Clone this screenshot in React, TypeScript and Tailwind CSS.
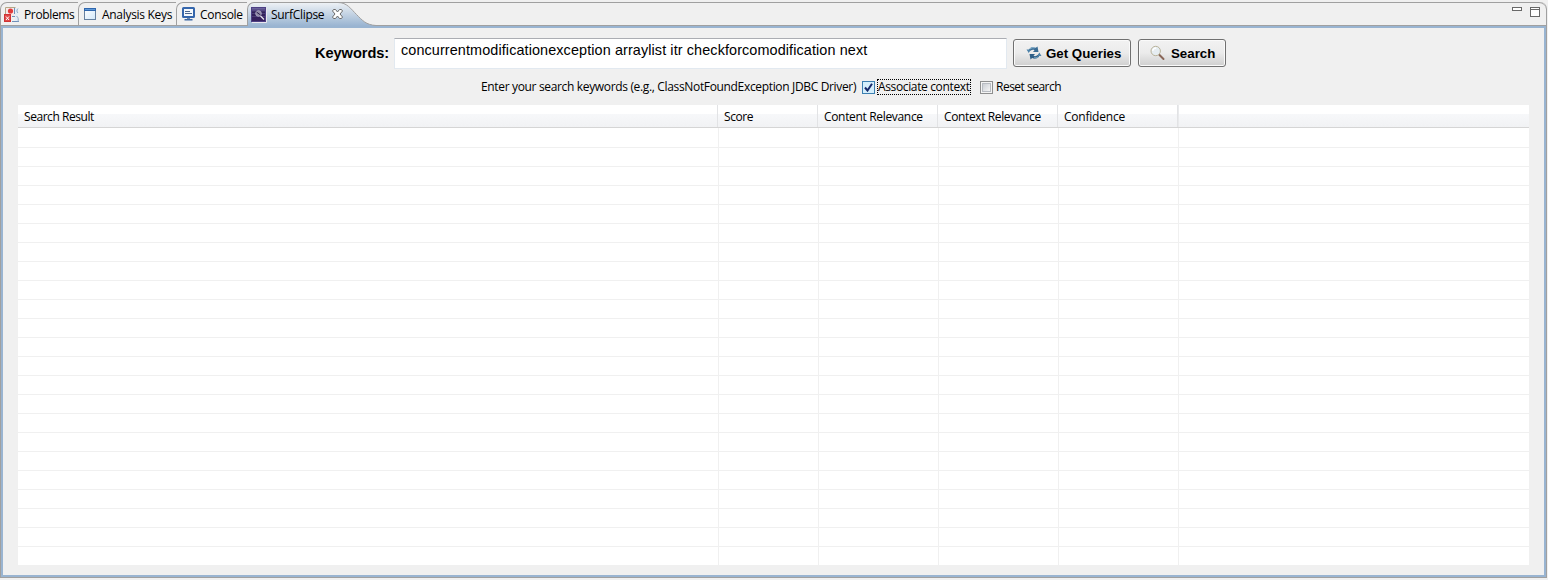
import type { ReactNode } from "react";

const ui = "font-['Open_Sans','Noto_Sans',sans-serif] text-[12px] leading-[16px] text-black whitespace-nowrap";

function ProblemsIcon() {
  return (
    <svg width="16" height="16" viewBox="0 0 16 16" className="mt-px shrink-0">
      <path d="M1.500 7V.500h10" stroke="#b5a888" fill="none" />
      <path d="M2 1h8v8H2z" fill="#f6e9e9" />
      <circle cx="6.500" cy="4" r="2.600" fill="#e23a3a" />
      <path d="M11 1v14h3V12l-1.500-2 1.500-2.500V4L12.500 1z" fill="#e4edf6" />
      <path d="M10.500 1v6M8 9.500h3M8 14.500h7" stroke="#6f8fb8" />
      <path d="M14 1.500c-1.500 2-1.500 3 0 4.500M12.500 9c2 1.500 2 3.500 1.500 5.500" stroke="#8ea9c9" fill="none" />
      <rect x="0.500" y="7.500" width="6" height="7" fill="#e04848" stroke="#cf3333" />
      <path d="M2 9.500l3 3.500M5 9.500l-3 3.500" stroke="#fff" />
    </svg>
  );
}

function WindowIcon() {
  return (
    <svg width="14" height="14" viewBox="0 0 14 14" className="shrink-0">
      <defs>
        <linearGradient id="win" x1="0" y1="0" x2="1" y2="1">
          <stop offset="0" stopColor="#fff" />
          <stop offset="1" stopColor="#d3e8fa" />
        </linearGradient>
      </defs>
      <rect x="0.500" y="1.500" width="11" height="11" fill="url(#win)" stroke="#66809f" />
      <path d="M0 1h12v3H0z" fill="#2f66ad" />
      <path d="M1 2h10v1H1z" fill="#5f99d8" />
    </svg>
  );
}

function ConsoleIcon() {
  return (
    <svg width="14" height="14" viewBox="0 0 14 14" className="shrink-0">
      <rect x="1" y="1" width="11" height="9" rx="0.500" fill="#f5f9fd" stroke="#3566ac" strokeWidth="2" />
      <path d="M3 4.500h5M3 6.500h7" stroke="#49658f" />
      <path d="M5 11h3v1H5z" fill="#6c86a8" />
      <path d="M2.500 12h8v1.500h-8z" fill="#3b67a5" />
    </svg>
  );
}

function SurfIcon() {
  return (
    <svg width="16" height="16" viewBox="0 0 16 16" className="shrink-0">
      <defs>
        <linearGradient id="surf" x1="0" y1="0" x2="0" y2="1">
          <stop offset="0" stopColor="#7872ad" />
          <stop offset="0.350" stopColor="#302158" />
          <stop offset="1" stopColor="#37205f" />
        </linearGradient>
      </defs>
      <rect x="0.500" y="0.500" width="14" height="14" fill="url(#surf)" stroke="#4d4084" />
      <path d="M1 3.500h13M1 6.500h13M1 9.500h13" stroke="#5c4d8b" opacity="0.600" />
      <circle cx="7.500" cy="6.500" r="2.800" fill="#8d88a3" stroke="#a9a4c0" />
      <path d="M5.500 5l4 3" stroke="#2a1b4d" />
      <path d="M9.500 9l3.500 3.500" stroke="#e9e8ef" strokeWidth="1.300" />
      <path d="M1 15.500h14.500V1" stroke="#e9e6ee" fill="none" />
    </svg>
  );
}

function CloseIcon() {
  return (
    <svg width="12" height="11" viewBox="0 0 12 11" className="-mt-px shrink-0">
      <path
        d="M1.500 .5h2l2 2.500 2-2.500h2l1 1.500L8 5l2.500 3-1 1.500h-2L5.500 7l-2 2.500h-2L.500 8 3 5 .500 2z"
        fill="#fff"
        stroke="#6b6b6b"
      />
    </svg>
  );
}

function RefreshIcon() {
  return (
    <svg width="16" height="14" viewBox="0 0 16 14" className="shrink-0">
      <path d="M2.500 6.500C2 2 6 0 9.800 1.800L11.500.500 12.500 6H7l1.500-1.700C7 3.300 4.500 4 2.500 6.500z" fill="#3a6c94" />
      <path d="M13.500 7c.8 4.500-3.500 7-7.300 5L4.500 13.500 3.500 8H9L7.500 9.700c1.500 1 4 .3 6-2.700z" fill="#2f5f87" />
      <path d="M.500 3.500h4L2.800 7zM11.500 10H15.500L13.300 6.500z" fill="#4d83aa" />
      <path d="M4 3c1.500-1.300 3-1.500 4.500-1M12.200 10.500c-1 1.200-2.500 1.600-4 1.300" stroke="#8ebbd6" fill="none" />
    </svg>
  );
}

function MagnifierIcon() {
  return (
    <svg width="16" height="16" viewBox="0 0 16 16" className="shrink-0">
      <path d="M9.500 10l4 4" stroke="#8a6658" strokeWidth="2" strokeLinecap="round" />
      <circle cx="5.700" cy="6" r="4.700" fill="#e6edf1" stroke="#b9b39a" />
      <path d="M2.700 6c.2-1.800 1.500-3 3.500-3" stroke="#fff" strokeWidth="1.300" fill="none" />
    </svg>
  );
}

function Tab({ icon, label, className, text }: { icon: ReactNode; label: string; className: string; text: string }) {
  return (
    <div className={`flex h-[23px] shrink-0 items-center rounded-tl-[7px] border-l border-t border-[#a0a0a0] ${className}`}>
      {icon}
      <span className={`${ui} pt-[2px] ${text}`}>{label}</span>
    </div>
  );
}

function TabBar() {
  return (
    <div className="mt-[2px] flex h-[24px] w-[1547px] rounded-t-[7px] border-b border-r border-[#a0a0a0]">
      <Tab icon={<ProblemsIcon />} label="Problems" className="w-[78px] pl-[3px]" text="ml-[4px] tracking-[-0.350px]" />
      <Tab icon={<WindowIcon />} label="Analysis Keys" className="w-[98px] pl-[5px]" text="ml-[4px] tracking-[-0.300px]" />
      <Tab icon={<ConsoleIcon />} label="Console" className="w-[71px] pl-[5px]" text="ml-[4px] tracking-[-0.300px]" />
      <div className="relative z-10 flex h-[24px] w-[91px] shrink-0 items-center rounded-tl-[7px] border-l border-t border-[#a0a0a0] bg-linear-to-b from-[#edf1f5] to-[#99b4d1] pl-[3px]">
        <SurfIcon />
        <span className={`${ui} ml-[4px] w-[61px] shrink-0 pt-px tracking-[-0.300px]`}>SurfClipse</span>
        <CloseIcon />
      </div>
      <svg width="38" height="24" viewBox="0 0 38 24" className="shrink-0">
        <defs>
          <linearGradient id="tab" x1="0" y1="0" x2="0" y2="1">
            <stop offset="0" stopColor="#edf1f5" />
            <stop offset="1" stopColor="#99b4d1" />
          </linearGradient>
        </defs>
        <path d="M0 .5C9 .500 13 7 18.500 12.500S28 23 38 23.500V24H0z" fill="url(#tab)" />
        <path d="M0 .5C9 .500 13 7 18.500 12.500S28 23 38 23.500" fill="none" stroke="#a0a0a0" />
        <path d="M0 .5H38" stroke="#a0a0a0" />
      </svg>
      <div className="flex h-[24px] grow justify-end gap-[8px] rounded-tr-[7px] border-t border-[#a0a0a0] pr-[6px]">
        <div className="mt-[4px] h-[4px] w-[10px] border border-[#696969] bg-white" />
        <div className="mt-[4px] h-[10px] w-[10px] border border-[#696969] bg-white">
          <div className="mt-px h-px bg-[#696969]" />
        </div>
      </div>
    </div>
  );
}

const button =
  "flex h-[28px] items-center rounded-[3px] border border-[#707070] bg-linear-to-b from-[#f2f2f2] from-0% via-[#ebebeb] via-50% to-[#cfcfcf] shadow-[inset_0_0_0_1px_#fafafa] font-['Liberation_Sans',Arial,sans-serif] text-[13.300px] leading-[16px] font-bold text-black whitespace-nowrap";

const columns = [
  { label: "Search Result", width: "w-[700px]", cell: "w-[701px]", tracking: "tracking-[-0.450px]" },
  { label: "Score", width: "w-[100px]", cell: "w-[100px]", tracking: "tracking-[-0.400px]" },
  { label: "Content Relevance", width: "w-[120px]", cell: "w-[120px]", tracking: "tracking-[-0.330px]" },
  { label: "Context Relevance", width: "w-[120px]", cell: "w-[120px]", tracking: "tracking-[-0.380px]" },
  { label: "Confidence", width: "w-[120px]", cell: "w-[120px]", tracking: "tracking-[-0.220px]" },
];

function ResultTable() {
  return (
    <div className="mx-[15px] flex h-[460px] w-[1511px] flex-col overflow-hidden bg-white">
      <div className="flex h-[23px] shrink-0 border-b border-[#d5d5d5] bg-linear-to-b from-white from-40% via-[#f7f8fa] via-41% to-[#f1f2f4]">
        {columns.map((c) => (
          <div key={c.label} className={`${c.width} shrink-0 border-r border-[#e2e3e5] pl-[6px] pt-[4px]`}>
            <span className={`${ui} ${c.tracking} block`}>{c.label}</span>
          </div>
        ))}
        <div className="w-px bg-[#e9eaec]" />
      </div>
      {Array.from({ length: 23 }, (_, i) => (
        <div key={i} className={`flex shrink-0 border-b border-[#f0f0f0] ${i === 0 ? "h-[20px]" : "h-[19px]"}`}>
          {columns.map((c) => (
            <div key={c.label} className={`${c.cell} shrink-0 border-r border-[#f0f0f0]`} />
          ))}
        </div>
      ))}
    </div>
  );
}

export default function App() {
  return (
    <div className="flex h-[580px] w-[1548px] flex-col overflow-hidden bg-[#f0f0f0]">
      <TabBar />
      <div className="h-[552px] w-[1547px] border-x border-b border-[#a0a0a0]">
        <div className="h-[551px] border-2 border-[#99b4d1] bg-[#f0f0f0]">
          <div className="flex h-[41px] items-start pl-[312px] pt-[10px]">
            <span className="mt-[7px] w-[79px] shrink-0 font-['Liberation_Sans',Arial,sans-serif] text-[14.600px] leading-[17px] font-bold tracking-[-0.050px] text-black">
              Keywords:
            </span>
            <div className="h-[31px] w-[613px] border border-[#e2e9f0] border-t-[#abadb3] bg-white pl-[6px] pt-[3px]">
              <span className="block font-['Liberation_Sans',Arial,sans-serif] text-[14.400px] leading-[17px] tracking-[0.110px] whitespace-nowrap text-black">
                concurrentmodificationexception arraylist itr checkforcomodification next
              </span>
            </div>
            <button className={`${button} ml-[6px] mt-px w-[118px] pl-[12px]`}>
              <RefreshIcon />
              <span className="ml-[4px] pt-[2px]">Get Queries</span>
            </button>
            <button className={`${button} ml-[7px] mt-px w-[88px] pl-[11px]`}>
              <MagnifierIcon />
              <span className="ml-[5px] pt-[2px]">Search</span>
            </button>
          </div>
          <div className="flex h-[36px] items-start pl-[478px] pt-[10px]">
            <span className={`${ui} w-[381px] shrink-0 tracking-[-0.340px]`}>
              Enter your search keywords (e.g., ClassNotFoundException JDBC Driver)
            </span>
            <div className="mt-[2px] flex h-[13px] w-[13px] items-center justify-center border border-[#3c7fb1] bg-[#d5effc]">
              <svg width="9" height="9" viewBox="0 0 9 9">
                <path d="M1 4.500l2.500 3L8 .8" fill="none" stroke="#17296b" strokeWidth="2" />
              </svg>
            </div>
            <div className="ml-[2px] h-[16px] w-[94px] border border-dotted border-black">
              <span className={`${ui} -mt-px block tracking-[-0.360px]`}>Associate context</span>
            </div>
            <div className="ml-[9px] mt-[2px] h-[13px] w-[13px] border border-[#8e8f8f] bg-[#f4f4f4] p-px">
              <div className="h-[9px] w-[9px] border border-[#b8bcc2] bg-linear-to-br from-[#cbcfd5] to-[#f6f6f6]" />
            </div>
            <span className={`${ui} ml-[3px] tracking-[-0.500px]`}>Reset search</span>
          </div>
          <ResultTable />
        </div>
      </div>
    </div>
  );
}
